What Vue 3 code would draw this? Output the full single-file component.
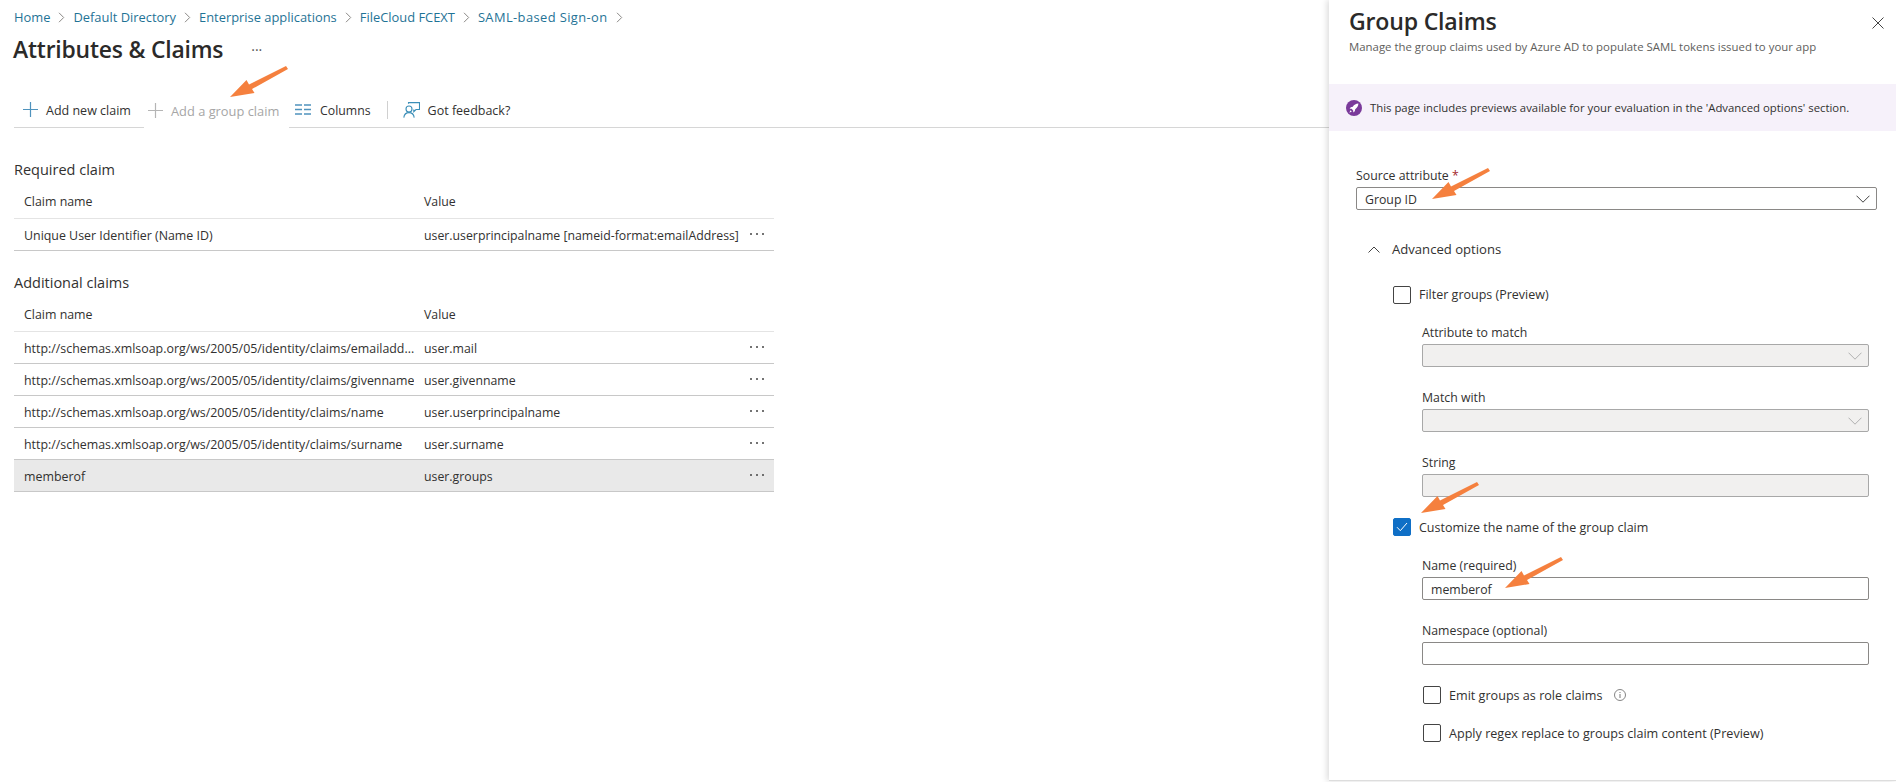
<script setup>
const crumbs = ['Home', 'Default Directory', 'Enterprise applications', 'FileCloud FCEXT', 'SAML-based Sign-on']
const additional = [
  { name: 'http://schemas.xmlsoap.org/ws/2005/05/identity/claims/emailadd...', value: 'user.mail' },
  { name: 'http://schemas.xmlsoap.org/ws/2005/05/identity/claims/givenname', value: 'user.givenname' },
  { name: 'http://schemas.xmlsoap.org/ws/2005/05/identity/claims/name', value: 'user.userprincipalname' },
  { name: 'http://schemas.xmlsoap.org/ws/2005/05/identity/claims/surname', value: 'user.surname' },
  { name: 'memberof', value: 'user.groups', selected: true },
]
const arrows = [
  { x: 230, y: 66 },
  { x: 1432, y: 168 },
  { x: 1421, y: 482 },
  { x: 1505, y: 557 },
]
</script>

<template>
  <div class="page">
    <main class="left">
      <nav class="crumbs">
        <template v-for="c in crumbs" :key="c">
          <a class="crumb">{{ c }}</a>
          <svg class="sep" width="7" height="11" viewBox="0 0 7 11"><path d="M1 .8 5.700 5.500 1 10.200" fill="none" stroke="#8a8886" stroke-width="1"/></svg>
        </template>
      </nav>
      <div class="title-row">
        <h1>Attributes &amp; Claims</h1>
        <span class="title-more">···</span>
      </div>
      <div class="toolbar">
        <div class="tbtn first">
          <svg width="15" height="15" viewBox="0 0 15 15"><path d="M7.500 0v15M0 7.500h15" stroke="#4f93bd" stroke-width="1.200"/></svg>
          <span>Add new claim</span>
        </div>
        <div class="tbtn disabled">
          <svg width="15" height="15" viewBox="0 0 15 15"><path d="M7.500 0v15M0 7.500h15" stroke="#b5b5b5" stroke-width="1.200"/></svg>
          <span>Add a group claim</span>
        </div>
        <div class="tbtn cols">
          <svg width="16" height="11" viewBox="0 0 16 11"><path d="M0 1h7M9 1h7M0 5.500h7M9 5.500h7M0 10h7M9 10h7" stroke="#4f93bd" stroke-width="1.300"/></svg>
          <span>Columns</span>
        </div>
        <i class="divider"></i>
        <div class="tbtn feedback">
          <svg width="17" height="16" viewBox="0 0 17 16" fill="none" stroke="#3c8fb8" stroke-width="1.100"><circle cx="6" cy="7" r="3"/><path d="M.8 15.600c.4-3.200 2.400-5 5.200-5s4.800 1.800 5.200 5M5.500 1.800V.6h11v6.900h-3.500l-2.200 2.200V7.500"/></svg>
          <span>Got feedback?</span>
        </div>
      </div>

      <h2 class="section first-section">Required claim</h2>
      <div class="row head head-a"><span class="c-name">Claim name</span><span class="c-value">Value</span></div>
      <div class="row">
        <span class="c-name">Unique User Identifier (Name ID)</span>
        <span class="c-value">user.userprincipalname [nameid-format:emailAddress]</span>
        <span class="dots"><b></b><b></b><b></b></span>
      </div>

      <h2 class="section second-section">Additional claims</h2>
      <div class="row head head-b"><span class="c-name">Claim name</span><span class="c-value">Value</span></div>
      <div v-for="r in additional" :key="r.name" class="row" :class="{ selected: r.selected }">
        <span class="c-name">{{ r.name }}</span>
        <span class="c-value">{{ r.value }}</span>
        <span class="dots"><b></b><b></b><b></b></span>
      </div>
    </main>

    <aside class="panel">
      <header class="phead">
        <div>
          <h2 class="ptitle">Group Claims</h2>
          <p class="psub">Manage the group claims used by Azure AD to populate SAML tokens issued to your app</p>
        </div>
        <svg class="close" width="12" height="12" viewBox="0 0 12 12"><path d="M.5.500l11 11M11.500.500l-11 11" stroke="#444" stroke-width="1"/></svg>
      </header>
      <div class="banner">
        <svg width="16" height="16" viewBox="0 0 16 16"><circle cx="8" cy="8" r="8" fill="#7a3a9a"/><path d="M12.400 3.600c-2.600.1-4.300 1.200-5.600 3.200l-2 .4-1.200 1.500 2 .1 1.600 1.600.1 2 1.500-1.200.4-2c2-1.300 3.100-3 3.200-5.600zM4.600 10.200l-1.300 2.500 2.500-1.300z" fill="#fff"/></svg>
        <span>This page includes previews available for your evaluation in the 'Advanced options' section.</span>
      </div>
      <div class="form">
        <label class="lbl">Source attribute <em>*</em></label>
        <div class="ctl select">
          <span>Group ID</span>
          <svg width="14" height="8" viewBox="0 0 14 8"><path d="M.5.700 7 7.200 13.500.700" fill="none" stroke="#444" stroke-width="1"/></svg>
        </div>
        <div class="adv">
          <svg width="12" height="7" viewBox="0 0 12 7"><path d="M.5 6.500 6 1l5.500 5.500" fill="none" stroke="#444" stroke-width="1"/></svg>
          <span>Advanced options</span>
        </div>
        <div class="check c1 filter"><i class="box"></i><span>Filter groups (Preview)</span></div>
        <div class="sub sub-a">
          <div class="field">
            <label class="lbl">Attribute to match</label>
            <div class="ctl select off"><svg width="14" height="8" viewBox="0 0 14 8"><path d="M.5.700 7 7.200 13.500.700" fill="none" stroke="#b0b0b0" stroke-width="1"/></svg></div>
          </div>
          <div class="field">
            <label class="lbl">Match with</label>
            <div class="ctl select off"><svg width="14" height="8" viewBox="0 0 14 8"><path d="M.5.700 7 7.200 13.500.700" fill="none" stroke="#b0b0b0" stroke-width="1"/></svg></div>
          </div>
          <div class="field">
            <label class="lbl">String</label>
            <div class="ctl off"></div>
          </div>
        </div>
        <div class="check c1 custom">
          <i class="box on"><svg width="12" height="10" viewBox="0 0 12 10"><path d="M1 5.200 4.300 8.700 11 1" fill="none" stroke="#fff" stroke-width="1"/></svg></i>
          <span>Customize the name of the group claim</span>
        </div>
        <div class="sub sub-b">
          <div class="field">
            <label class="lbl">Name (required)</label>
            <div class="ctl"><span>memberof</span></div>
          </div>
          <div class="field">
            <label class="lbl">Namespace (optional)</label>
            <div class="ctl"></div>
          </div>
          <div class="check c2 emit">
            <i class="box"></i><span>Emit groups as role claims</span>
            <svg class="info" width="12" height="12" viewBox="0 0 12 12"><circle cx="6" cy="6" r="5.500" fill="none" stroke="#777" stroke-width=".9"/><path d="M6 5v4M6 3v1" stroke="#777" stroke-width="1"/></svg>
          </div>
          <div class="check c2 regex"><i class="box"></i><span>Apply regex replace to groups claim content (Preview)</span></div>
        </div>
      </div>
    </aside>

    <svg
      v-for="a in arrows"
      :key="a.x"
      class="arrow"
      :style="{ left: a.x + 'px', top: a.y + 'px' }"
      width="60"
      height="32"
      viewBox="0 0 60 32"
    >
      <polygon points="0,31 16.500,14 19,18.500 56,0 58,3 22,23 24.500,27" fill="#f5803e"/>
    </svg>
  </div>
</template>

<style>
html, body { margin: 0; background: #fff; overflow: hidden; }
</style>

<style scoped>
.page {
  position: relative;
  display: flex;
  width: 1896px;
  height: 782px;
  overflow: hidden;
  background: #fff;
  font-family: "Open Sans", "Noto Sans", sans-serif;
  font-size: 12.300px;
  color: #323130;
}
.left { flex: 1; min-width: 0; }
.crumbs {
  display: flex;
  align-items: center;
  height: 18px;
  padding: 8px 0 0 14px;
  gap: 8px;
  font-size: 12.900px;
}
.crumb { color: #1f7396; }
.crumb:last-of-type { letter-spacing: 0.4px; }
.title-row { display: flex; align-items: center; height: 32px; margin-top: 8px; padding-left: 13px; }
h1 { margin: 0; font-size: 22.900px; font-weight: 600; line-height: 32px; color: #2b2a29; letter-spacing: -0.2px; }
.title-more { margin-left: 28px; font-size: 14px; color: #555; line-height: 32px; }
.toolbar {
  display: flex;
  align-items: center;
  height: 35px;
  margin: 26px 0 0 14px;
  border-bottom: 1px solid #d6d6d6;
  font-size: 12.500px;
}
.tbtn { display: flex; align-items: center; gap: 9px; white-space: nowrap; }
.tbtn span { padding-top: 2px; }
.first { margin-left: 9px; width: 121px; gap: 8px; }
.disabled {
  align-self: stretch;
  height: 36px;
  margin-bottom: -1px;
  padding-left: 4px;
  width: 141px;
  background: #fff;
  color: #a6a6a6;
  position: relative;
  gap: 8px;
  font-size: 12.850px;
}
.cols { margin-left: 6px; font-size: 12.300px; }
.divider { width: 1px; height: 18px; margin: 0 15px 0 16px; background: #d0d0d0; }
.feedback { gap: 8px; }
.section { margin: 0; font-size: 14.500px; font-weight: 400; line-height: 20px; padding-left: 14px; color: #323130; }
.first-section { margin-top: 32px; }
.second-section { margin-top: 22px; }
.row {
  display: flex;
  align-items: center;
  position: relative;
  box-sizing: border-box;
  width: 760px;
  height: 32px;
  margin-left: 14px;
  padding-top: 1px;
  border-bottom: 1px solid #c8c8c8;
  white-space: nowrap;
}
.head { height: 34px; padding-top: 0; border-bottom-color: #e4e4e4; }
.head-a { margin-top: 5px; }
.head-b { margin-top: 5px; }
.selected { background: #e9e9e9; }
.c-name { width: 400px; padding-left: 10px; box-sizing: border-box; overflow: hidden; font-size: 12.400px; }
.c-value { padding-left: 10px; font-size: 12.300px; }
.dots { position: absolute; right: 10px; top: 14px; display: flex; gap: 4px; }
.dots b { width: 2px; height: 2px; border-radius: 50%; background: #444; }
.panel {
  width: 567px;
  height: 781px;
  flex: none;
  box-sizing: border-box;
  border-bottom: 1px solid #ddd;
  box-shadow: -2px 0 6px rgba(0, 0, 0, 0.14);
  background: #fff;
  position: relative;
}
.phead { display: flex; justify-content: space-between; align-items: flex-start; padding: 5px 12px 0 20px; }
.ptitle { margin: 0; font-size: 23.100px; font-weight: 600; line-height: 32px; color: #2b2a29; letter-spacing: -0.2px; }
.psub { margin: 2px 0 0; font-size: 11.400px; line-height: 16px; color: #605e5c; }
.close { margin-top: 12px; }
.banner {
  display: flex;
  align-items: center;
  gap: 8px;
  height: 47px;
  margin-top: 29px;
  padding-left: 17px;
  background: #f6f1fa;
  font-size: 11.350px;
}
.form { padding: 36px 19px 0 27px; }
.lbl { display: block; line-height: 16px; padding-top: 1px; }
.lbl em { font-style: normal; color: #a4262c; }
.ctl {
  display: flex;
  align-items: center;
  justify-content: space-between;
  box-sizing: border-box;
  height: 23px;
  margin-top: 3px;
  padding: 1px 6px 0 8px;
  border: 1px solid #8a8886;
  border-radius: 2px;
}
.off { background: #f1f0ef; border-color: #a8a8a8; justify-content: flex-end; }
.adv { display: flex; align-items: center; gap: 12px; height: 16px; margin-top: 31px; padding-left: 12px; font-size: 13.100px; }
.check { display: flex; align-items: center; gap: 8px; height: 18px; font-size: 12.500px; }
.box {
  display: flex;
  align-items: center;
  justify-content: center;
  box-sizing: border-box;
  width: 18px;
  height: 18px;
  border: 1px solid #444;
  border-radius: 2px;
}
.on { background: #0f6fc6; border-color: #0f6fc6; }
.c1 { margin-left: 37px; }
.filter { margin-top: 29px; }
.filter span { margin-top: -2px; }
.custom { margin-top: 21px; }
.sub { margin-left: 66px; width: 447px; }
.sub-a { margin-top: -2px; }
.sub-b { margin-top: -1px; }
.field { margin-top: 22px; }
.c2 { margin-left: 1px; font-size: 12.600px; }
.emit { margin-top: 21px; }
.regex { margin-top: 20px; }
.info { margin-left: 4px; }
.arrow { position: absolute; }
</style>
